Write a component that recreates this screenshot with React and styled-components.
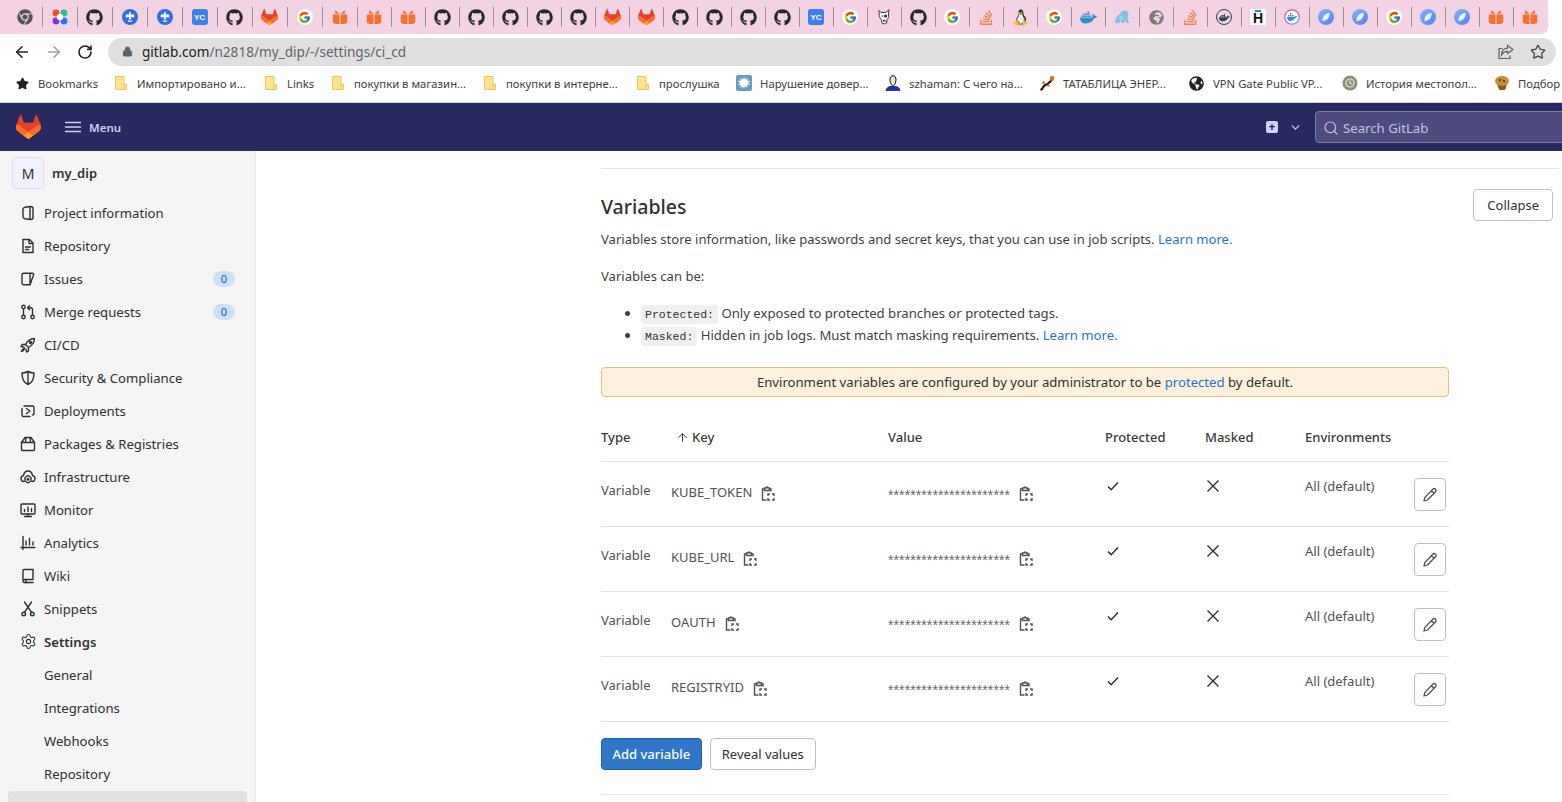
import React from 'react';
import styled, { createGlobalStyle } from 'styled-components';
import { ArrowLeft, ArrowRight, RotateCw, Lock, Star, Search, ChevronDown, ArrowUp, Settings } from 'lucide-react';
import { FaGithub, FaChrome, FaStar, FaStackOverflow, FaDocker, FaGlobeAfrica, FaGlobeAmericas } from 'react-icons/fa';
import { FcGoogle, FcLinux } from 'react-icons/fc';

const FONT = '"Noto Sans", "Open Sans", sans-serif';

const GlobalStyle = createGlobalStyle`
    html, body {
        margin: 0;
        height: 100%;
        overflow: hidden;
        background: #fff;
    }
    body {
        font-family: ${FONT};
        font-size: 13px;
        color: #303030;
    }
    * { box-sizing: border-box; }
`;

const Page = styled.div`
    width: 1562px;
    height: 802px;
    display: flex;
    flex-direction: column;
    overflow: hidden;
`;

/* browser chrome */
const TabStrip = styled.div`
    height: 34px;
    width: 1548px;
    flex: none;
    display: flex;
    padding-left: 8px;
    background: #f2d2e3;
    border-bottom-right-radius: 7px;
`;

const Tab = styled.div`
    width: ${(p) => p.$w}px;
    height: 34px;
    flex: none;
    display: flex;
    align-items: center;
    justify-content: center;
    padding-right: 2px;
    position: relative;
    &::after {
        content: '';
        position: absolute;
        right: 0;
        top: 7px;
        height: 20px;
        width: 1px;
        background: ${(p) => (p.$last ? 'transparent' : '#9a8c95')};
    }
`;

const AddressRow = styled.div`
    height: 32px;
    flex: none;
    display: flex;
    align-items: flex-end;
    padding-left: 13px;
    padding-right: 6px;
`;

const NavButton = styled.div`
    width: 32px;
    height: 28px;
    flex: none;
    display: flex;
    align-items: center;
    color: ${(p) => (p.$off ? '#a0a0a0' : '#202124')};
`;

const AddressBar = styled.div`
    flex: 1;
    height: 28px;
    margin-left: -1px;
    display: flex;
    align-items: center;
    padding: 0 10px 1px 14px;
    background: #dfdfdf;
    border-radius: 14px;
    font-size: 13.6px;
    color: #5f6368;
`;

const UrlHost = styled.span`
    color: #202124;
`;

const Url = styled.div`
    flex: 1;
    margin-left: 9px;
`;

const AddressAction = styled.div`
    display: flex;
    margin-left: 16px;
    color: #5f6368;
`;

const BookmarkBar = styled.div`
    height: 37px;
    flex: none;
    display: flex;
    align-items: center;
    padding: 0 0 2px 16px;
    border-bottom: 1px solid #cfcfcf;
    overflow: hidden;
`;

const Bookmark = styled.div`
    width: ${(p) => p.$w}px;
    flex: none;
    display: flex;
    align-items: center;
    white-space: nowrap;
    font-size: 11.3px;
    color: #3c4043;
`;

const BookmarkIcon = styled.span`
    width: ${(p) => (p.$wide ? 24 : 22)}px;
    margin-left: ${(p) => (p.$wide ? -2 : 0)}px;
    flex: none;
    display: flex;
    align-items: center;
`;

/* gitlab top bar */
const TopBar = styled.header`
    height: 48px;
    flex: none;
    display: flex;
    align-items: center;
    padding-left: 16px;
    background: #292961;
    color: #d1d0f0;
`;

const MenuButton = styled.div`
    display: flex;
    align-items: center;
    gap: 8px;
    margin-left: 24px;
    font-size: 11.5px;
    font-weight: 600;
`;

const TopSpacer = styled.div`
    flex: 1;
`;

const PlusBox = styled.div`
    width: 12px;
    height: 12px;
    display: flex;
    align-items: center;
    justify-content: center;
    border-radius: 2px;
    background: #d1d0f0;
    color: #292961;
    font-size: 12px;
    font-weight: 700;
    line-height: 1;
`;

const TopChevron = styled.div`
    display: flex;
    margin: 0 13px 0 11px;
`;

const SearchBox = styled.div`
    width: 252px;
    height: 32px;
    margin-right: -5px;
    display: flex;
    align-items: center;
    gap: 4px;
    padding: 1px 0 0 7px;
    background: #4d4c7d;
    border: 1px solid #7d7cab;
    border-radius: 4px;
    font-size: 13.2px;
    color: #c4c3e2;
`;

/* page below the bar */
const Body = styled.div`
    flex: 1;
    min-height: 0;
    display: flex;
`;

const Sidebar = styled.aside`
    width: 256px;
    flex: none;
    padding: 6px 8px 0 8px;
    background: #f5f5f5;
    border-right: 1px solid #e9e9e9;
    overflow: hidden;
`;

const ProjectRow = styled.div`
    display: flex;
    align-items: center;
    gap: 8px;
    height: 32px;
    margin: 0 0 7px 4px;
    font-size: 13px;
    font-weight: 600;
`;

const Avatar = styled.div`
    width: 32px;
    height: 32px;
    display: flex;
    align-items: center;
    justify-content: center;
    background: #f0f0ff;
    border: 1px solid #dedeef;
    border-radius: 4px;
    font-size: 14px;
    font-weight: 400;
    color: #303030;
`;

const NavItem = styled.div`
    height: 33px;
    display: flex;
    align-items: center;
    padding: 0 12px 0 12px;
    font-size: 13.15px;
    font-weight: ${(p) => (p.$bold ? 600 : 400)};
    color: #303030;
`;

const NavIcon = styled.span`
    width: 24px;
    flex: none;
    display: flex;
    align-items: center;
`;

const NavLabel = styled.span`
    flex: 1;
    margin-left: ${(p) => (p.$sub ? '24px' : '0')};
`;

const Count = styled.span`
    width: 22px;
    height: 16px;
    display: flex;
    align-items: center;
    justify-content: center;
    border-radius: 8px;
    background: #cbe2f9;
    font-size: 11px;
    color: #0b5cad;
`;

const ActiveItem = styled.div`
    height: 40px;
    margin-top: 1px;
    background: #e1e1e1;
    border-radius: 4px;
`;

const Main = styled.main`
    flex: 1;
    min-width: 0;
    padding: 17px 0 0 345px;
    overflow: hidden;
`;

const Rule = styled.div`
    height: 1px;
    width: ${(p) => p.$w}px;
    background: #e4e4e4;
`;

const SectionHeader = styled.div`
    width: 952px;
    margin-top: 20px;
    display: flex;
    justify-content: space-between;
    align-items: flex-start;
`;

const Title = styled.h4`
    margin: 0;
    padding-top: 1px;
    height: 34px;
    font-size: 19.5px;
    line-height: 34px;
    font-weight: 500;
    color: #303030;
`;

const OutlineButton = styled.button`
    height: 32px;
    padding: 0 ${(p) => p.$pad || 11}px;
    display: inline-flex;
    align-items: center;
    justify-content: center;
    background: #fff;
    border: 1px solid #bfbfbf;
    border-radius: 4px;
    font-family: ${FONT};
    font-size: 13px;
    color: #303030;
`;

const PrimaryButton = styled(OutlineButton)`
    background: #2f75c8;
    border-color: #1f5fae;
    color: #fff;
    font-weight: 500;
`;

const IconButton = styled(OutlineButton)`
    width: 32px;
    height: 33px;
    padding: 0;
`;

const Text = styled.p`
    margin: ${(p) => p.$top}px 0 0;
    font-size: 13.05px;
    line-height: 20px;
    color: #3f3f3f;
`;

const Link = styled.span`
    color: #1f75cb;
`;

const Notes = styled.ul`
    margin: 16px 0 0;
    padding-left: 40px;
    font-size: 13.15px;
    color: #3f3f3f;
`;

const Note = styled.li`
    height: 22px;
    line-height: 22px;
`;

const Code = styled.code`
    padding: 3px 4px;
    background: #f0f0f0;
    border-radius: 4px;
    font-family: "Liberation Mono", monospace;
    font-size: 11.5px;
    line-height: 1;
    color: #303030;
`;

const Alert = styled.div`
    width: 848px;
    height: 30px;
    margin-top: 21px;
    display: flex;
    align-items: center;
    justify-content: center;
    background: #fdf1dd;
    border: 1px solid #e9be74;
    border-radius: 4px;
    font-size: 13.15px;
    color: #303030;
`;

const Table = styled.div`
    width: 848px;
    margin-top: 24px;
`;

const TableRow = styled.div`
    height: ${(p) => (p.$head ? 41 : 65)}px;
    display: grid;
    grid-template-columns: 70px 217px 217px 100px 100px 109px 35px;
    border-bottom: 1px solid #dfdfdf;
`;

const HeadCell = styled.div`
    display: flex;
    align-items: center;
    height: 32px;
    font-size: 13px;
    font-weight: 500;
    color: #3a3a3a;
`;

const Cell = styled.div`
    display: flex;
    align-items: flex-start;
    gap: ${(p) => p.$gap || 0}px;
    padding-top: ${(p) => p.$top}px;
    font-size: 13px;
    line-height: 20px;
    color: #525252;
`;

const Stars = styled.span`
    font-family: "Liberation Sans", sans-serif;
    font-size: 14px;
    letter-spacing: 0.1px;
    color: #666;
    padding-top: 3px;
`;

const Footer = styled.div`
    display: flex;
    gap: 8px;
    margin: 16px 0 24px;
`;

/* drawn icons */
const GitlabLogo = ({ size = 16 }) => (
    <svg width={size} height={size * 0.96} viewBox="0 0 25 24">
        <path fill="#E24329" d="m24.507 9.5-.034-.09L21.082.562a.896.896 0 0 0-1.694.091l-2.29 7.01H7.825L5.535.653a.898.898 0 0 0-1.694-.09L.451 9.411.416 9.5a6.297 6.297 0 0 0 2.09 7.278l.012.01.03.022 5.16 3.867 2.56 1.935 1.554 1.176a1.051 1.051 0 0 0 1.268 0l1.555-1.176 2.56-1.935 5.197-3.89.014-.01A6.297 6.297 0 0 0 24.507 9.5Z" />
        <path fill="#FC6D26" d="m24.507 9.5-.034-.09a11.44 11.44 0 0 0-4.56 2.051l-7.447 5.632 4.742 3.584 5.197-3.89.014-.01A6.297 6.297 0 0 0 24.507 9.5Z" />
        <path fill="#FCA326" d="m7.707 20.677 2.56 1.935 1.555 1.176a1.051 1.051 0 0 0 1.268 0l1.555-1.176 2.56-1.935-4.743-3.584-4.755 3.584Z" />
        <path fill="#FC6D26" d="M5.01 11.461a11.43 11.43 0 0 0-4.56-2.05L.416 9.5a6.297 6.297 0 0 0 2.09 7.278l.012.01.03.022 5.16 3.867 4.745-3.584-7.444-5.632Z" />
    </svg>
);

const Dots = () => (
    <svg width="16" height="16" viewBox="0 0 16 16">
        <circle cx="4" cy="4" r="3.4" fill="#f24e1e" />
        <circle cx="12" cy="4" r="3.4" fill="#19c39c" />
        <circle cx="4" cy="12" r="3.4" fill="#8a2be2" />
        <circle cx="12" cy="12" r="3.4" fill="#1a7cf0" />
        <circle cx="8" cy="8" r="3.2" fill="#fff" />
    </svg>
);

const Kube = () => (
    <svg width="16" height="16" viewBox="0 0 16 16">
        <circle cx="8" cy="8" r="8" fill="#2f6fde" />
        <path fill="#fff" d="M8 2.5c1.3 1.2 1.3 2.4.7 3.6 1-.9 2.2-1.1 3.2-.3 1 .9.6 2.6-.7 2.8-.8.1-1.5-.3-1.9-.8l-.6.9.9 1.6H6.4l.9-1.6-.6-.9c-.4.5-1.1.9-1.9.8-1.3-.2-1.7-1.9-.7-2.8 1-.8 2.2-.6 3.2.3-.6-1.2-.6-2.4.7-3.6zM6 11.5h4v1.2H6z" />
    </svg>
);

const YcBox = styled.span`
    width: 16px;
    height: 16px;
    display: flex;
    align-items: center;
    justify-content: center;
    background: #3b82ee;
    border-radius: 3px;
    font-family: "Liberation Sans", sans-serif;
    font-size: 8px;
    font-weight: 700;
    color: #fff;
`;

const GoogleBadge = styled.span`
    width: 16px;
    height: 16px;
    display: flex;
    align-items: center;
    justify-content: center;
    background: #fff;
    border-radius: 50%;
`;

const HBox = styled.span`
    width: 16px;
    height: 16px;
    display: flex;
    align-items: center;
    justify-content: center;
    padding-top: 2px;
    background: #fff;
    font-family: "Liberation Sans", sans-serif;
    font-size: 14px;
    font-weight: 700;
    color: #111;
    position: relative;
    &::before {
        content: '';
        position: absolute;
        top: 1px;
        left: 5px;
        width: 6px;
        height: 2px;
        background: #2a7de1;
    }
`;

const BookGift = () => (
    <svg width="16" height="16" viewBox="0 0 16 16">
        <path fill="#f4702c" d="M.8 5.5h6.7V15H3.5L.8 13.5zM8.5 5.5h6.7v8L12.500 15h-4z" />
        <path fill="#f4702c" d="M3.200 1 7.500 4.800H3.200zM12.800 1 8.500 4.800h4.300z" />
    </svg>
);

const Dog = () => (
    <svg width="16" height="16" viewBox="0 0 16 16">
        <path fill="#f5f5f5" stroke="#333" strokeWidth="1" d="M3 1.5 5 3.500h4.500L13 .8l-.6 5.200c.6 2-.2 3.500-1.400 4.500l-.4 3.500c-1.500 1.300-3.500 1-4.600 0L5.500 11C3.800 9.500 3 7 3 1.500z" />
        <circle cx="9.5" cy="7" r="1.6" fill="#333" />
        <circle cx="6.3" cy="7" r=".8" fill="#333" />
        <path fill="#333" d="M7 11h2.500v1.500H7z" />
    </svg>
);

const Frog = () => (
    <svg width="16" height="16" viewBox="0 0 16 16">
        <path fill="#7cc1ea" d="M1 14c0-4 2-7.500 5.500-9.500C7.500 2 9 1 11 1.500c2 .3 3.500 1.800 3.500 3.500 0 1.500-.5 2.500-1 3l1.500 6h-3L11 10.500 10 14H7.500L7 11.500 5 14z" />
        <path stroke="#f2d2e3" strokeWidth=".7" d="M5 8h4M5 10h4M7 6v5" />
    </svg>
);

const DarkRing = styled.span`
    width: 16px;
    height: 16px;
    display: flex;
    align-items: center;
    justify-content: center;
    border: 1.5px solid #2d3f52;
    border-radius: 50%;
`;

const DockerDark = () => (
    <DarkRing>
        <FaDocker size={11} color="#2d3f52" />
    </DarkRing>
);

const DockerRing = () => (
    <svg width="16" height="16" viewBox="0 0 16 16">
        <defs>
            <linearGradient id="ring" x1="0" y1="0" x2="1" y2="1">
                <stop offset="0" stopColor="#e85d75" />
                <stop offset=".5" stopColor="#9a5fd8" />
                <stop offset="1" stopColor="#35b8d8" />
            </linearGradient>
        </defs>
        <circle cx="8" cy="8" r="7.2" fill="#fff" stroke="url(#ring)" strokeWidth="1.2" />
        <path fill="#2f8fd0" d="M3 8h7.500c.5-1 1.500-1.200 2.500-.8-.3 1.300-1.200 1.800-2 1.800C10 11 8 12 6 12c-2 0-3-1.800-3-4z" />
        <path fill="#2f8fd0" d="M4 6h1.500v1.500H4zM6 6h1.500v1.500H6zM8 6h1.500v1.500H8zM6 4h1.500v1.500H6z" />
    </svg>
);

const Leaf = () => (
    <svg width="16" height="16" viewBox="0 0 16 16">
        <defs>
            <linearGradient id="leaf" x1="0" y1="0" x2="1" y2="1">
                <stop offset="0" stopColor="#8ab4f8" />
                <stop offset="1" stopColor="#4f7ff0" />
            </linearGradient>
        </defs>
        <circle cx="8" cy="8" r="8" fill="url(#leaf)" />
        <path fill="#e9f4ff" d="M11.500 3.800c.6 3.800-1.400 7.600-6.800 8.500C3.900 8 6.800 4.300 11.500 3.800z" />
    </svg>
);

const GithubTab = () => <FaGithub size={17} color="#24292f" />;

const tabIcons = {
    chrome: <FaChrome size={16} color="#555" />,
    dots: <Dots />,
    gh: <GithubTab />,
    kube: <Kube />,
    yc: <YcBox>YC</YcBox>,
    gl: <GitlabLogo size={17} />,
    g: (
        <GoogleBadge>
            <FcGoogle size={13} />
        </GoogleBadge>
    ),
    book: <BookGift />,
    dog: <Dog />,
    so: <FaStackOverflow size={17} color="#e8854a" />,
    linux: <FcLinux size={21} />,
    docker: <FaDocker size={17} color="#2f8fd0" />,
    frog: <Frog />,
    globe: <FaGlobeAfrica size={15} color="#7c7c7c" />,
    dark: <DockerDark />,
    h: <HBox>H</HBox>,
    ring: <DockerRing />,
    leaf: <Leaf />,
};

const tabs = [
    'chrome', 'dots', 'gh', 'kube', 'kube', 'yc', 'gh', 'gl', 'g', 'book',
    'book', 'book', 'gh', 'gh', 'gh', 'gh', 'gh', 'gl', 'gl', 'gh',
    'gh', 'gh', 'gh', 'yc', 'g', 'dog', 'gh', 'g', 'so', 'linux',
    'g', 'docker', 'frog', 'globe', 'so', 'dark', 'h', 'ring', 'leaf', 'leaf',
    'g', 'leaf', 'leaf', 'book', 'book',
];

const ShareIcon = () => (
    <svg width="16" height="16" viewBox="0 0 16 16" fill="none" stroke="#5f6368" strokeWidth="1.2">
        <path d="M4.500 4.500H1v10h11v-3" />
        <path d="M9.500 1.500 15 5.500l-5.500 4V7.300C7 7.300 5 8.300 3.500 11c0-4 2.500-6.500 6-6.800z" />
    </svg>
);

const Folder = () => (
    <svg width="12" height="14" viewBox="0 0 12 14">
        <path fill="#fde293" stroke="#efc64f" d="M.5.5h8.500v8h2.500v5H.5z" />
        <path fill="none" stroke="#efc64f" d="M9 8.500v5" />
    </svg>
);

const Splat = () => (
    <svg width="16" height="16" viewBox="0 0 16 16">
        <rect width="16" height="16" rx="2" fill="#6b9dbd" />
        <path fill="#fff" d="M8 2l1 2.500L11.500 3l-.5 2.500L14 6l-2 2 2 2-3-.2.5 2.700-2.500-1.500L8 14l-1-2.500-2.500 1.500.5-2.700L2 10l2-2-2-2 3-.5L4.500 3 7 4.500z" />
    </svg>
);

const Person = () => (
    <svg width="16" height="16" viewBox="0 0 16 16">
        <path fill="#1b2fd0" stroke="#000" strokeWidth=".6" d="M1 15.500c.3-2.500 2-3.500 4-4h6c2 .5 3.700 1.500 4 4z" />
        <path fill="#e8e2d8" stroke="#000" strokeWidth="1" d="M8 .8c2 0 3 1.500 3 4s-1.500 6-3 6-3-3.500-3-6 1-4 3-4z" />
    </svg>
);

const Lizard = () => (
    <svg width="16" height="16" viewBox="0 0 16 16">
        <path fill="none" stroke="#2a120a" strokeWidth="2.2" d="M1.500 15c3-1 2-4 5-5s4-3 6.500-5" />
        <path fill="#d9691e" d="M12 .8l3.500 1-1 3.500-2.500 1-1.200-2.500zM5 5.500l1.500 3.500-4-.5zM9 8.500l2.500 3-3.500 0z" />
    </svg>
);

const History = () => (
    <svg width="16" height="16" viewBox="0 0 16 16">
        <circle cx="8" cy="8" r="7.5" fill="#8f8f78" />
        <circle cx="8" cy="8" r="4" fill="none" stroke="#e8e8dc" strokeWidth="1.2" />
        <path stroke="#e8e8dc" strokeWidth="1.2" d="M8 5.500V8l2 1" fill="none" />
    </svg>
);

const Muffin = () => (
    <svg width="16" height="16" viewBox="0 0 16 16">
        <path fill="#8a5a1c" d="M3 9l10-1-1.500 6.500c-2 1-5 1-6.500 0z" />
        <ellipse cx="8" cy="6" rx="7" ry="5" fill="#c98f35" />
        <circle cx="6" cy="5" r="1" fill="#4a2a10" />
        <circle cx="10" cy="6" r="1" fill="#4a2a10" />
    </svg>
);

const bookmarks = [
    { icon: <FaStar size={13} color="#202124" />, label: 'Bookmarks', w: 99 },
    { icon: <Folder />, label: 'Импортировано и...', w: 150 },
    { icon: <Folder />, label: 'Links', w: 67 },
    { icon: <Folder />, label: 'покупки в магазин...', w: 152 },
    { icon: <Folder />, label: 'покупки в интерне...', w: 153 },
    { icon: <Folder />, label: 'прослушка', w: 101 },
    { icon: <Splat />, label: 'Нарушение довер...', w: 149, wide: true },
    { icon: <Person />, label: 'szhaman: С чего на...', w: 154, wide: true },
    { icon: <Lizard />, label: 'ТАТАБЛИЦА ЭНЕР...', w: 150, wide: true },
    { icon: <FaGlobeAmericas size={15} color="#202124" />, label: 'VPN Gate Public VP...', w: 153, wide: true },
    { icon: <History />, label: 'История местопол...', w: 152, wide: true },
    { icon: <Muffin />, label: 'Подбор', w: 60, wide: true },
];

const Ico = ({ children }) => (
    <svg width="16" height="16" viewBox="0 0 16 16" fill="none" stroke="#303030" strokeWidth="1.4" strokeLinecap="round" strokeLinejoin="round">
        {children}
    </svg>
);

const sideIcons = {
    project: (
        <Ico>
            <path d="M5 2.2 10.500 1.500c1.500 0 2.500.8 2.500 2v9c0 1.200-1 2-2.500 2L5 13.800c-1.200-.2-2-1-2-2V4.200c0-1 .8-1.800 2-2zM10 1.600v12.800" />
        </Ico>
    ),
    repo: (
        <Ico>
            <path d="M3 1.500h6.500L13 5v9.500H3zM9 1.500V5.500h4M5.500 9h5M5.500 11.500h3" />
        </Ico>
    ),
    issues: (
        <Ico>
            <path d="M2 4c0-1 .7-1.700 1.700-1.700h6.300v11.400H3.700C2.700 13.700 2 13 2 12zM10 2.300h2.500c.8 0 1.500 1 1 1.800L10 13.700" />
        </Ico>
    ),
    merge: (
        <Ico>
            <circle cx="3.5" cy="3" r="1.7" />
            <circle cx="3.5" cy="13" r="1.7" />
            <circle cx="12.5" cy="13" r="1.7" />
            <path d="M3.500 4.700v6.600M12.500 11.300V5.500c0-1-.8-1.800-1.800-1.800H8M9.500 1.700 7.500 3.700l2 2" />
        </Ico>
    ),
    rocket: (
        <Ico>
            <path d="M14.500 1.500c-4 .3-7 2.200-9 6L8.500 10.500c3.800-2 5.700-5 6-9zM5.500 7.500 2 7.500 1 9.500l3 .5M8.500 10.500v3.500l-2 1-.5-3M4.500 11.500c-1.500.3-2.500 1.500-3 3 1.500-.5 2.700-1.500 3-3z" />
            <circle cx="10.5" cy="5.5" r="1" />
        </Ico>
    ),
    shield: (
        <Ico>
            <path d="M8 1.500c2 1 4 1.500 6 1.500 0 6-1.500 9.800-6 11.500C3.500 12.800 2 9 2 3c2 0 4-.5 6-1.500zM8 1.500v13" />
        </Ico>
    ),
    deploy: (
        <Ico>
            <path d="M4 3h8.500c1 0 1.500.5 1.500 1.500v6c0 1-.5 1.500-1.500 1.500M2 5.500v6.500c0 1 .5 1.500 1.500 1.500H10M6.500 5.500 10 8l-3.500 2.500" />
        </Ico>
    ),
    pack: (
        <Ico>
            <path d="M1.500 6.500h13v7c0 .5-.5 1-1 1h-11c-.5 0-1-.5-1-1zM1.500 6.500 5 1.500h6l3.500 5M6 1.500 5.500 6.500M10 1.500l.5 5" />
        </Ico>
    ),
    infra: (
        <Ico>
            <path d="M4 12.500C2 12.500 1 11 1 9.500c0-1.500 1-2.700 2.500-3C4 3.500 6 2 8 2c2.500 0 4 1.500 4.500 4.500 1.500.3 2.500 1.500 2.500 3 0 1.500-1 3-3 3" />
            <path d="M8 6.500l3 2v3.500l-3 2-3-2V8.500z" />
            <circle cx="8" cy="10.2" r=".8" />
        </Ico>
    ),
    monitor: (
        <Ico>
            <rect x="1" y="2" width="14" height="10" rx="1" />
            <path d="M8 12v2.500M4.500 14.500h7M4.500 9.500V7.500M8 9.500V5M11.500 9.500V6.500" />
        </Ico>
    ),
    chart: (
        <Ico>
            <path d="M3 1.500v13M1 12.500h14M6 10V6M9.500 10V3.500M13 10V7" />
        </Ico>
    ),
    wiki: (
        <Ico>
            <path d="M3 12V2.500c0-.6.5-1 1-1h9v10H4.500C3.500 11.500 3 12 3 13s.5 1.500 1.500 1.500H13M6 11.500v3.500" />
        </Ico>
    ),
    snip: (
        <Ico>
            <circle cx="3.7" cy="13" r="1.8" />
            <circle cx="12.3" cy="13" r="1.8" />
            <path d="M4.500 11.300 11.500 1M11.500 11.300 4.500 1" />
        </Ico>
    ),
    gear: <Settings size={17} strokeWidth={1.5} color="#303030" />,
};

const navItems = [
    { icon: 'project', label: 'Project information' },
    { icon: 'repo', label: 'Repository' },
    { icon: 'issues', label: 'Issues', count: 0 },
    { icon: 'merge', label: 'Merge requests', count: 0 },
    { icon: 'rocket', label: 'CI/CD' },
    { icon: 'shield', label: 'Security & Compliance' },
    { icon: 'deploy', label: 'Deployments' },
    { icon: 'pack', label: 'Packages & Registries' },
    { icon: 'infra', label: 'Infrastructure' },
    { icon: 'monitor', label: 'Monitor' },
    { icon: 'chart', label: 'Analytics' },
    { icon: 'wiki', label: 'Wiki' },
    { icon: 'snip', label: 'Snippets' },
    { icon: 'gear', label: 'Settings', bold: true },
];

const subItems = ['General', 'Integrations', 'Webhooks', 'Repository'];

const CopyIcon = () => (
    <svg width="14" height="16" viewBox="0 0 14 16" fill="none" stroke="#525252" strokeWidth="1.4" style={{ flex: 'none', marginTop: 4 }}>
        <path d="M5.500 14H1.500V3H3.500M8.500 3h1.500v2.500" />
        <path d="M3.500 4.500V2h1.500a1 1 0 0 1 2 0h1.500v2.500z" />
        <path d="M7 10V8h2M11 8h2v2M13 12v2h-2M9 14H7v-2" />
    </svg>
);

const PencilIcon = () => (
    <svg width="16" height="16" viewBox="0 0 16 16" fill="none" stroke="#525252" strokeWidth="1.3" strokeLinejoin="round">
        <path d="M10.800 2.200a1.700 1.700 0 0 1 2.700 2.500L5.500 13 2 14l.9-3.600zM9.500 3.700l2.700 2.600" />
    </svg>
);

const CheckIcon = () => (
    <svg width="16" height="16" viewBox="0 0 16 16" fill="none" stroke="#303030" strokeWidth="1.5">
        <path d="M3 8.500l3.200 3.200L13 4.500" />
    </svg>
);

const CrossIcon = () => (
    <svg width="16" height="16" viewBox="0 0 16 16" fill="none" stroke="#303030" strokeWidth="1.4">
        <path d="M2.500 2.500l11 11M13.500 2.500l-11 11" />
    </svg>
);

const rows = ['KUBE_TOKEN', 'KUBE_URL', 'OAUTH', 'REGISTRYID'];

const SortArrow = styled.span`
    display: flex;
    width: 21px;
    padding-left: 5px;
`;

const App = () => (
    <Page>
        <GlobalStyle />
        <TabStrip>
            {tabs.map((t, i) => (
                <Tab key={i} $w={i < 10 ? 35 : 34} $last={i === tabs.length - 1}>
                    {tabIcons[t]}
                </Tab>
            ))}
        </TabStrip>
        <AddressRow>
            <NavButton>
                <ArrowLeft size={18} />
            </NavButton>
            <NavButton $off>
                <ArrowRight size={18} />
            </NavButton>
            <NavButton>
                <RotateCw size={16} strokeWidth={2.4} />
            </NavButton>
            <AddressBar>
                <Lock size={11} fill="#5f6368" color="#5f6368" />
                <Url>
                    <UrlHost>gitlab.com</UrlHost>/n2818/my_dip/-/settings/ci_cd
                </Url>
                <AddressAction>
                    <ShareIcon />
                </AddressAction>
                <AddressAction>
                    <Star size={16} strokeWidth={1.8} color="#3c4043" />
                </AddressAction>
            </AddressBar>
        </AddressRow>
        <BookmarkBar>
            {bookmarks.map((b) => (
                <Bookmark key={b.label} $w={b.w}>
                    <BookmarkIcon $wide={b.wide}>{b.icon}</BookmarkIcon>
                    {b.label}
                </Bookmark>
            ))}
        </BookmarkBar>
        <TopBar>
            <GitlabLogo size={25} />
            <MenuButton>
                <svg width="16" height="12" viewBox="0 0 16 12" fill="none" stroke="#d1d0f0" strokeWidth="1.4">
                    <path d="M0 1.500h16M0 6h16M0 10.500h16" />
                </svg>
                Menu
            </MenuButton>
            <TopSpacer />
            <PlusBox>+</PlusBox>
            <TopChevron>
                <ChevronDown size={13} strokeWidth={2.2} />
            </TopChevron>
            <SearchBox>
                <Search size={16} strokeWidth={1.8} />
                Search GitLab
            </SearchBox>
        </TopBar>
        <Body>
            <Sidebar>
                <ProjectRow>
                    <Avatar>M</Avatar>
                    my_dip
                </ProjectRow>
                {navItems.map((n) => (
                    <NavItem key={n.label} $bold={n.bold}>
                        <NavIcon>{sideIcons[n.icon]}</NavIcon>
                        <NavLabel>{n.label}</NavLabel>
                        {n.count !== undefined && <Count>{n.count}</Count>}
                    </NavItem>
                ))}
                {subItems.map((s) => (
                    <NavItem key={s}>
                        <NavLabel $sub>{s}</NavLabel>
                    </NavItem>
                ))}
                <ActiveItem />
            </Sidebar>
            <Main>
                <Rule $w={958} />
                <SectionHeader>
                    <Title>Variables</Title>
                    <OutlineButton $pad={13}>Collapse</OutlineButton>
                </SectionHeader>
                <Text $top={6}>
                    Variables store information, like passwords and secret keys, that you can use in job scripts. <Link>Learn more.</Link>
                </Text>
                <Text $top={17}>Variables can be:</Text>
                <Notes>
                    <Note>
                        <Code>Protected:</Code> Only exposed to protected branches or protected tags.
                    </Note>
                    <Note>
                        <Code>Masked:</Code> Hidden in job logs. Must match masking requirements. <Link>Learn more.</Link>
                    </Note>
                </Notes>
                <Alert>
                    <span>
                        Environment variables are configured by your administrator to be <Link>protected</Link> by default.
                    </span>
                </Alert>
                <Table>
                    <TableRow $head>
                        <HeadCell>Type</HeadCell>
                        <HeadCell>
                            <SortArrow>
                                <ArrowUp size={13} strokeWidth={1.8} />
                            </SortArrow>
                            Key
                        </HeadCell>
                        <HeadCell>Value</HeadCell>
                        <HeadCell>Protected</HeadCell>
                        <HeadCell>Masked</HeadCell>
                        <HeadCell>Environments</HeadCell>
                        <HeadCell />
                    </TableRow>
                    {rows.map((key) => (
                        <TableRow key={key}>
                            <Cell $top={18}>Variable</Cell>
                            <Cell $top={20} $gap={9}>
                                {key}
                                <CopyIcon />
                            </Cell>
                            <Cell $top={20} $gap={9}>
                                <Stars>**********************</Stars>
                                <CopyIcon />
                            </Cell>
                            <Cell $top={16}>
                                <CheckIcon />
                            </Cell>
                            <Cell $top={16}>
                                <CrossIcon />
                            </Cell>
                            <Cell $top={14}>All (default)</Cell>
                            <Cell $top={16}>
                                <IconButton>
                                    <PencilIcon />
                                </IconButton>
                            </Cell>
                        </TableRow>
                    ))}
                </Table>
                <Footer>
                    <PrimaryButton $pad={10.5}>Add variable</PrimaryButton>
                    <OutlineButton>Reveal values</OutlineButton>
                </Footer>
                <Rule $w={848} />
            </Main>
        </Body>
    </Page>
);

export default App;
